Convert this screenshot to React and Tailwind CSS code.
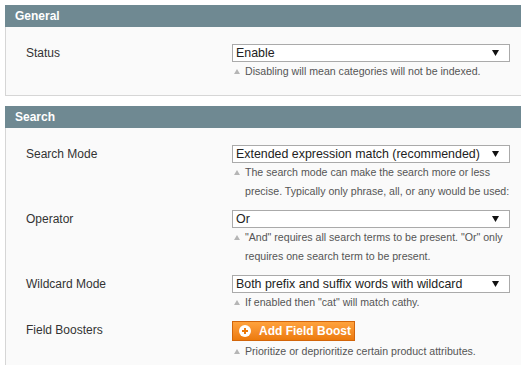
import React from 'react';

const font = { fontFamily: '"Liberation Sans", Arial, sans-serif' };

const Hint = ({ children }) => (
    <div className="flex text-[10.6px] leading-[19px] text-[#555]">
        <span className="w-[13px] shrink-0 flex items-center h-[19px] pl-[2px]">
            <svg width="6" height="5" viewBox="0 0 6 5"><path d="M3 0 L6 5 L0 5 Z" fill="#b5b5b5" /></svg>
        </span>
        <span className="w-[271px]">{children}</span>
    </div>
);

const Select = ({ value }) => (
    <div className="w-[278px] h-[18px] border border-[#aaaaaa] bg-white flex items-center justify-between pl-[3px] pr-[10px] text-[12.4px] text-[#222]">
        <span>{value}</span>
        <svg width="7" height="6" viewBox="0 0 7 6"><path d="M0 0 L7 0 L3.5 6 Z" fill="#111" /></svg>
    </div>
);

const Row = ({ label, children }) => (
    <div className="flex mb-[9px] last:mb-0">
        <div className="w-[206px] shrink-0 text-[12px] leading-[18px] text-[#333]">{label}</div>
        <div className="w-[284px]">{children}</div>
    </div>
);

const Panel = ({ title, children, bottom }) => (
    <div className="w-[530px]">
        <div className="h-[22px] bg-[#6f8992] pl-[10px] flex items-center text-white font-bold text-[12px]">{title}</div>
        <div className={`bg-[#fafafa] border-l border-[#d6d6d6] pl-[20px] pt-[17px] ${bottom ? 'border-b pb-[14px]' : 'pb-[10px]'}`}>
            {children}
        </div>
    </div>
);

export default function App() {
    return (
        <div className="w-[521px] h-[365px] overflow-hidden bg-white pt-[5px] pl-[5px]" style={font}>
            <Panel title="General" bottom>
                <Row label="Status">
                    <Select value="Enable" />
                    <Hint>Disabling will mean categories will not be indexed.</Hint>
                </Row>
            </Panel>
            <div className="h-[10px]" />
            <Panel title="Search">
                <Row label="Search Mode">
                    <Select value="Extended expression match (recommended)" />
                    <Hint>The search mode can make the search more or less precise. Typically only phrase, all, or any would be used:</Hint>
                </Row>
                <Row label="Operator">
                    <Select value="Or" />
                    <Hint>"And" requires all search terms to be present. "Or" only requires one search term to be present.</Hint>
                </Row>
                <Row label="Wildcard Mode">
                    <Select value="Both prefix and suffix words with wildcard" />
                    <Hint>If enabled then "cat" will match cathy.</Hint>
                </Row>
                <Row label="Field Boosters">
                    <div className="h-[18px] flex items-start">
                        <button className="h-[20px] w-[123px] flex items-center gap-[8px] pl-[6px] border border-[#d2650a] bg-gradient-to-b from-[#ffa23c] to-[#ec7a0a] text-white font-bold text-[12px]">
                            <svg width="12" height="12" viewBox="0 0 12 12">
                                <circle cx="6" cy="6" r="6" fill="#fff" />
                                <path d="M6 3 V9 M3 6 H9" stroke="#ec7a0a" strokeWidth="2" />
                            </svg>
                            Add Field Boost
                        </button>
                    </div>
                    <div className="h-[3px]" />
                    <Hint>Prioritize or deprioritize certain product attributes.</Hint>
                </Row>
            </Panel>
        </div>
    );
}
